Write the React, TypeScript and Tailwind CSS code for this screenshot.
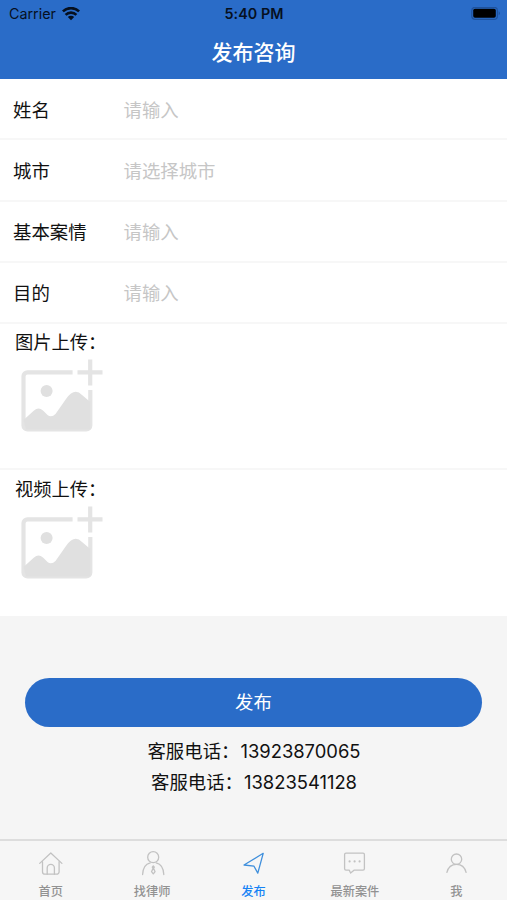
import React from "react";

const fields = [
  { label: "姓名", placeholder: "请输入", size: "h-[61px] pt-[4px]" },
  { label: "城市", placeholder: "请选择城市", size: "h-[62px] pt-[3px]" },
  { label: "基本案情", placeholder: "请输入", size: "h-[61px] pt-[3px]" },
  { label: "目的", placeholder: "请输入", size: "h-[61px] pt-[3px]" },
];

const phones = ["13923870065", "13823541128"];

const WifiIcon = () => (
  <svg className="w-[18px] h-[14px]" viewBox="0 0 18 14">
    <g fill="none" stroke="#06101f" strokeWidth="2.6">
      <path d="M0.9 4.4a11.6 11.6 0 0 1 16.2 0" />
      <path d="M3.6 7.9a7.6 7.6 0 0 1 10.8 0" />
    </g>
    <path d="M5.8 10a4.6 4.6 0 0 1 6.4 0L9 13.2z" fill="#06101f" />
  </svg>
);

const BatteryIcon = () => (
  <svg className="w-[30px] h-[14px]" viewBox="0 0 30 14">
    <rect
      x="0.8"
      y="0.3"
      width="25.6"
      height="12"
      rx="3.4"
      fill="none"
      stroke="#1f529c"
      strokeWidth="1.2"
    />
    <rect x="2.2" y="1.8" width="22.6" height="9" rx="1.8" fill="#000" />
    <path d="M27.7 4.3a2.3 2.3 0 0 1 0 4z" fill="#1f529c" />
  </svg>
);

const UploadIcon = () => (
  <svg className="w-[84px] h-[74px]" viewBox="0 0 84 74">
    <g fill="none" stroke="#e4e4e4" strokeWidth="4.2">
      <path d="M52.6 13.3H7.5a4 4 0 0 0-4 4V66.5a4 4 0 0 0 4 4H66.3a4 4 0 0 0 4-4V31" />
      <path d="M57.5 13.3H82.5M70.2 0.5V26.5" />
    </g>
    <circle cx="26.6" cy="32" r="6" fill="#e0e0e0" />
    <path
      d="M3.5 61L14 51.5Q18.5 47.5 23 51.5L27.5 56Q31.5 58.8 35.5 55L46 40Q54.5 28 62 36L70.3 43V70.5H6z"
      fill="#e0e0e0"
    />
  </svg>
);

const tabs = [
  {
    label: "首页",
    icon: (
      <>
        <path d="M1.7 13.4L12.8 3l11.1 10.4" />
        <path d="M4.5 11.7v10a2.5 2.5 0 0 0 2.5 2.5h11.6a2.5 2.5 0 0 0 2.5-2.5v-10" />
        <path d="M9.2 24.2v-6.3a3.6 3.6 0 0 1 7.2 0v6.3" />
      </>
    ),
  },
  {
    label: "找律师",
    icon: (
      <>
        <circle cx="13.2" cy="7.2" r="5.5" />
        <path d="M2.6 24.6c.2-6.6 3.4-10.8 7.6-11.8M16.2 12.8c4.2 1 7.4 5.2 7.6 11.8" />
        <path d="M13.3 16l-1 1.2.8 1.2-1.6 3.3 1.8 2.2 1.8-2.2-1.6-3.3.8-1.2z" />
      </>
    ),
  },
  {
    label: "发布",
    active: true,
    icon: <path d="M22.2 3.3L3 15l10 1.2 3.8 6.9z" />,
  },
  {
    label: "最新案件",
    icon: (
      <>
        <path d="M4 3.2h17a1.4 1.4 0 0 1 1.4 1.4v14.2a1.4 1.4 0 0 1-1.4 1.4H12l-3.4 2.8-1.3-2.8H4a1.4 1.4 0 0 1-1.4-1.4V4.6A1.4 1.4 0 0 1 4 3.2z" />
        <path d="M7.6 11.4h.01M12.6 11.4h.01M17.6 11.4h.01" strokeWidth="2.2" />
      </>
    ),
  },
  {
    label: "我",
    icon: (
      <>
        <circle cx="12.5" cy="9.2" r="5.2" />
        <path d="M2.9 22.4c1.2-4.8 4.6-8 9.6-8s8.4 3.2 9.6 8" />
      </>
    ),
  },
];

const App = () => {
  return (
    <div className="flex flex-col w-[507px] h-[900px] overflow-hidden bg-[#f5f5f5] text-[#111] font-['Inter','Noto_Sans_CJK_SC',sans-serif]">
      <header className="h-[79px] bg-[#2a6cc8]">
        <div className="grid grid-cols-3 items-center h-[27px] pl-[9px] pr-[6px] text-[14.3px] text-[#06101f]">
          <div className="flex items-center gap-[6px]">
            <span>Carrier</span>
            <WifiIcon />
          </div>
          <span className="pr-[2px] text-center font-semibold tracking-[0.1px]">
            5:40 PM
          </span>
          <div className="flex justify-end">
            <BatteryIcon />
          </div>
        </div>
        <h1 className="h-[52px] leading-[52px] text-center text-[21px] font-medium text-white">
          发布咨询
        </h1>
      </header>

      <main className="bg-white">
        {fields.map((field) => (
          <div
            key={field.label}
            className={`flex items-center ${field.size} pl-[13px] border-b-2 border-[#f7f7f7] text-[18.4px]`}
          >
            <span className="w-[110.5px]">{field.label}</span>
            <span className="text-[#c6c6c6]">{field.placeholder}</span>
          </div>
        ))}
        <section className="h-[146px] pl-[15px] border-b-2 border-[#f7f7f7]">
          <p className="h-[35px] leading-[37px] text-[18.3px]">图片上传：</p>
          <div className="pl-[5px]">
            <UploadIcon />
          </div>
        </section>
        <section className="h-[146px] pl-[15px]">
          <p className="h-[36px] leading-[38px] text-[18.3px]">视频上传：</p>
          <div className="pl-[5px]">
            <UploadIcon />
          </div>
        </section>
      </main>

      <div className="flex flex-col flex-1 px-[25px] pt-[62px]">
        <button className="h-[49px] rounded-full bg-[#2a6cc8] text-[18.4px] text-white">
          发布
        </button>
        <div className="pt-[9px] pl-[1px] text-center text-[18.4px] leading-[31px]">
          {phones.map((phone) => (
            <p key={phone}>
              客服电话：<span className="pl-[1px]">{phone}</span>
            </p>
          ))}
        </div>
      </div>

      <nav className="grid grid-cols-5 h-[61px] border-t-2 border-[#dddddd] bg-[#f6f6f6]">
        {tabs.map((tab) => (
          <div
            key={tab.label}
            className={`flex flex-col items-center pt-[9px] text-[12.2px] font-medium ${
              tab.active ? "text-[#1683f5]" : "text-[#929292]"
            }`}
          >
            <svg
              className={`w-[25px] h-[27px] ${
                tab.active ? "text-[#3f8fdc]" : "text-[#c2c2c2]"
              }`}
              viewBox="0 0 25 27"
              fill="none"
              stroke="currentColor"
              strokeWidth="1.3"
              strokeLinecap="round"
              strokeLinejoin="round"
            >
              {tab.icon}
            </svg>
            <span className="mt-[6px] leading-[18px]">{tab.label}</span>
          </div>
        ))}
      </nav>
    </div>
  );
};

export default App;
